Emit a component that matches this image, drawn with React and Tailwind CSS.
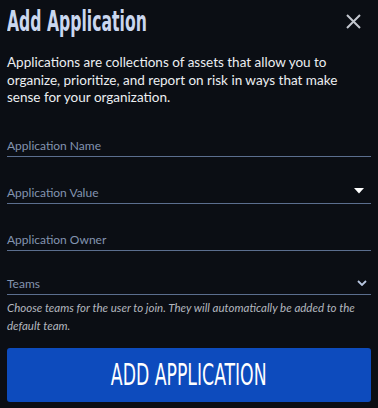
import React from 'react';

const condensed = { fontFamily: '"Liberation Sans Narrow", "DejaVu Sans Condensed", sans-serif' };

function Field({ label, icon }) {
  return (
    <div className="flex items-end justify-between h-[47px] border-b border-[#5b6e8e] pb-[2px]">
      <span className="text-[12px] leading-[16px] text-[#8394b0]">{label}</span>
      {icon}
    </div>
  );
}

export default function App() {
  return (
    <div
      className="w-[378px] h-[408px] bg-[#0b0e14] px-[7px] overflow-hidden"
      style={{ fontFamily: 'Lato, "Open Sans", sans-serif' }}
    >
      {/* Header */}
      <div className="flex items-center justify-between h-[42px]">
        <h1
          className="origin-left scale-x-[0.6] whitespace-nowrap text-[29px] font-bold leading-[36px] text-[#cad7ef]"
          style={condensed}
        >
          Add Application
        </h1>
        <button className="mr-[10px] text-[#c3c7cf]">
          <svg width="15" height="15" viewBox="0 0 15 15" fill="none" stroke="currentColor" strokeWidth="2">
            <path d="M1 1 L14 14 M14 1 L1 14" />
          </svg>
        </button>
      </div>

      <p className="mt-[12px] text-[13.5px] leading-[17.5px] text-[#eceef2]">
        Applications are collections of assets that allow you to organize, prioritize, and report on risk in ways that make sense for your organization.
      </p>

      <div className="mt-[3px]">
        <Field label="Application Name" />
        <Field
          label="Application Value"
          icon={
            <svg width="10" height="6" viewBox="0 0 10 6" className="mr-[7px] mb-[7px]">
              <path d="M0 0 H10 L5 5.5 Z" fill="#ffffff" />
            </svg>
          }
        />
        <Field label="Application Owner" />
        <div className="flex items-end justify-between h-[44px] border-b border-[#5b6e8e] pb-[2px]">
          <span className="text-[12px] leading-[16px] text-[#8394b0]">Teams</span>
          <svg width="10" height="6" viewBox="0 0 10 6" fill="none" stroke="#b8c6e0" strokeWidth="1.8" className="mr-[4px] mb-[6px]">
            <path d="M1 1 L5 5 L9 1" />
          </svg>
        </div>
        <p className="mt-[4px] text-[11.5px] italic leading-[18px] text-[#b3b7bf]">
          Choose teams for the user to join. They will automatically be added to the default team.
        </p>
      </div>

      <button className="mt-[13px] flex h-[54px] w-full items-center justify-center rounded-[3px] bg-[#0d4bbd]">
        <span
          className="inline-block scale-x-[0.64] whitespace-nowrap text-[30px] leading-[36px] text-white"
          style={condensed}
        >
          ADD APPLICATION
        </span>
      </button>
    </div>
  );
}
